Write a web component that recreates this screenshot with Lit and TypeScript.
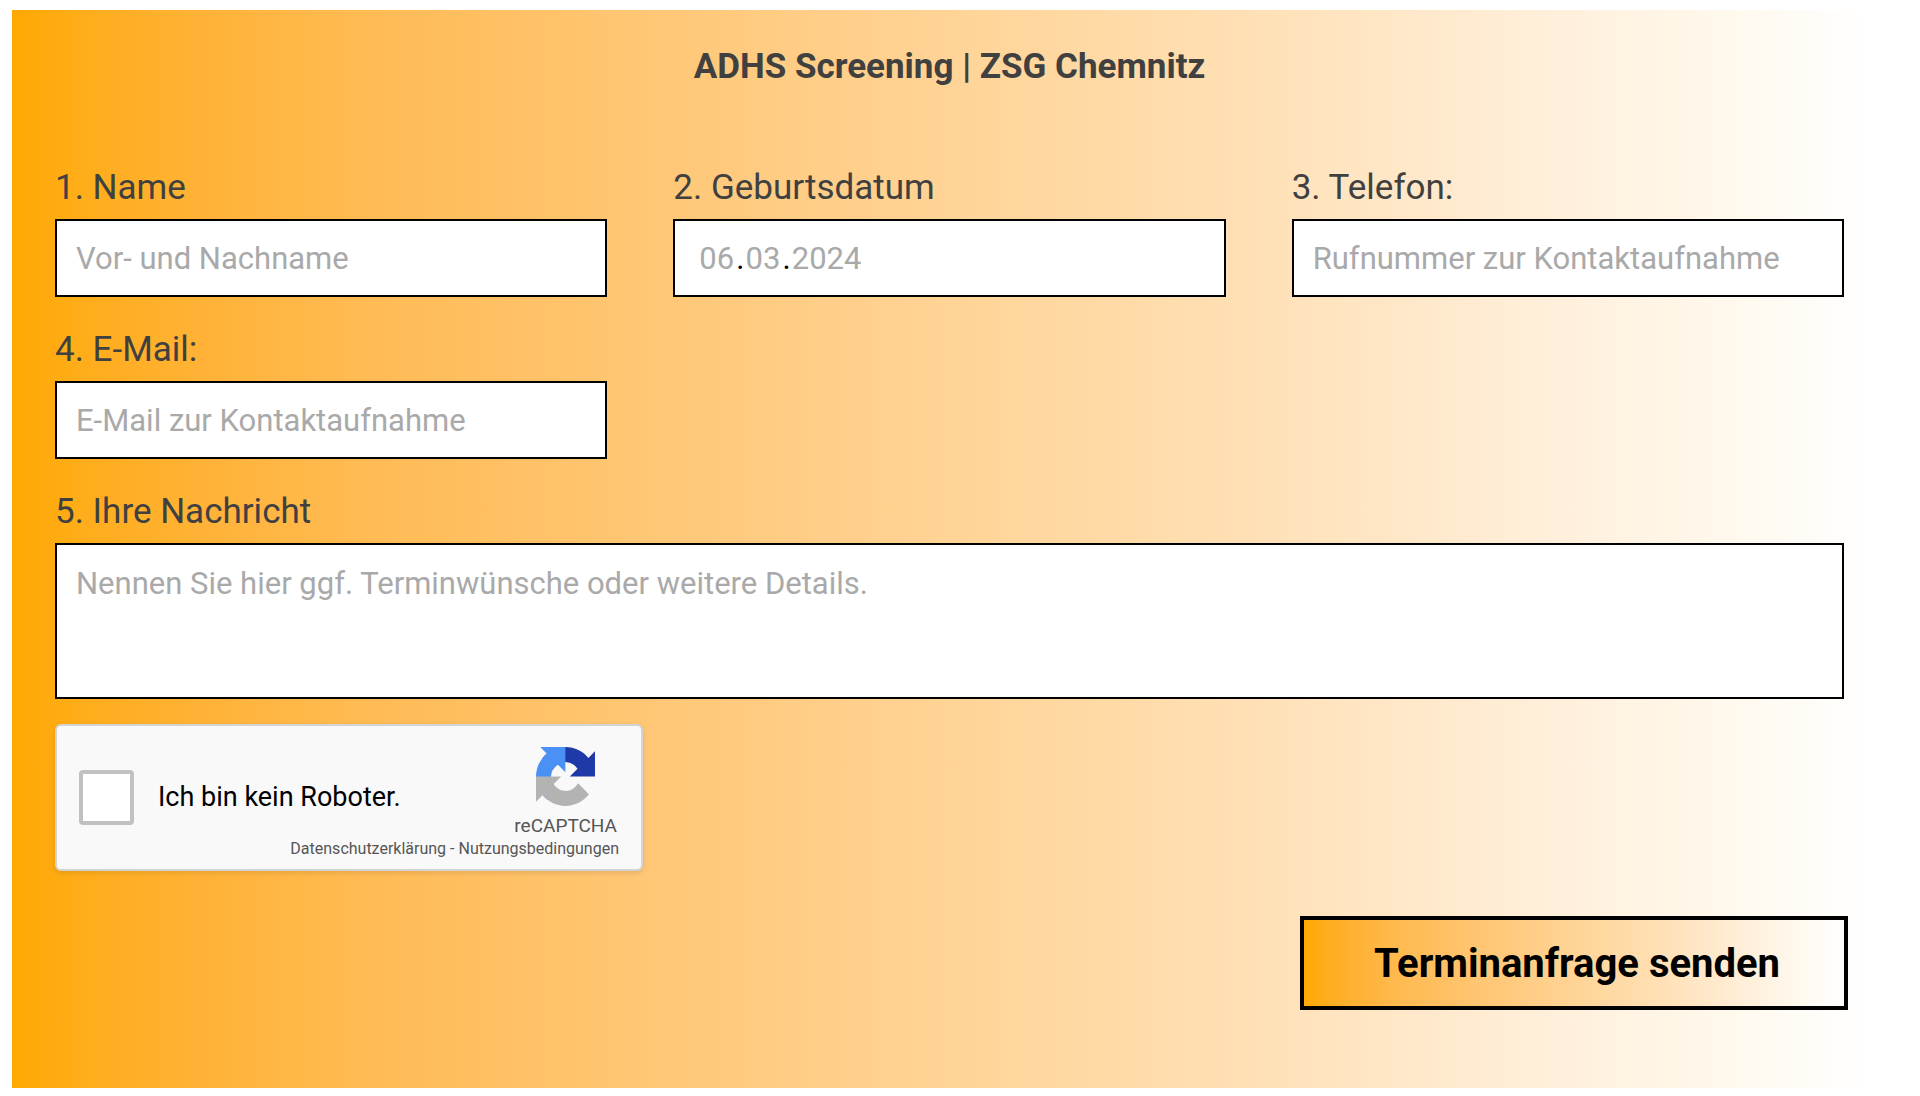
import { LitElement, html, css } from "lit";
import { customElement } from "lit/decorators.js";

@customElement("recaptcha-box")
class RecaptchaBox extends LitElement {
  static styles = css`
    :host {
      display: block;
      font-family: Roboto, "Liberation Sans", sans-serif;
    }
    .card {
      box-sizing: border-box;
      width: 588px;
      max-width: 100%;
      display: grid;
      grid-template-columns: 1fr auto;
      padding: 9px 22px 10px;
      border: 2px solid #d3d3d3;
      border-radius: 6px;
      background: #f9f9f9;
      box-shadow: 0 2px 4px 1px rgba(0, 0, 0, 0.08);
    }
    .check {
      grid-area: 1 / 1 / 3 / 2;
      display: flex;
      align-items: center;
      gap: 24px;
      font-size: 27px;
      line-height: 32px;
      color: #000;
    }
    .tick {
      appearance: none;
      box-sizing: border-box;
      width: 55px;
      height: 55px;
      margin: 0;
      border: 4px solid #c1c1c1;
      border-radius: 4px;
      background: #fff;
    }
    .tick:checked {
      background: #4285f4;
    }
    .brand {
      grid-area: 1 / 2 / 2 / 3;
      display: flex;
      flex-direction: column;
      align-items: center;
      gap: 9px;
      padding: 12px 2px 2px 0;
      font-size: 19px;
      line-height: 22px;
      color: #555;
    }
    .logo {
      display: block;
      width: 59px;
      height: 59px;
    }
    .links {
      grid-area: 2 / 1 / 3 / 3;
      display: flex;
      justify-content: flex-end;
      gap: 4px;
      font-size: 16px;
      line-height: 20px;
      color: #555;
    }
    .link {
      color: inherit;
      text-decoration: none;
    }
  `;

  render() {
    return html`
      <div class="card">
        <label class="check">
          <input class="tick" type="checkbox" />
          <span>Ich bin kein Roboter.</span>
        </label>
        <div class="brand">
          <svg class="logo" viewBox="0 0 64 64" aria-hidden="true">
            <path fill="#2039a8" d="M64 31.955l-.033-1.37V4.687l-7.16 7.16C50.948 4.674 42.033.093 32.05.093c-10.4 0-19.622 4.96-25.458 12.64l11.736 11.86a15.55 15.55 0 0 1 4.754-5.334c2.05-1.6 4.952-2.906 8.968-2.906.485 0 .86.057 1.135.163 4.976.393 9.288 3.14 11.828 7.124l-8.307 8.307L64 31.953"/>
            <path fill="#4a90f5" d="M31.862.094l-1.37.033H4.594l7.16 7.16C4.58 13.147 0 22.06 0 32.046c0 10.4 4.96 19.622 12.64 25.458L24.5 45.768a15.55 15.55 0 0 1-5.334-4.754c-1.6-2.05-2.906-4.952-2.906-8.968 0-.485.057-.86.163-1.135.393-4.976 3.14-9.288 7.124-11.828l8.307 8.307L31.86.095"/>
            <path fill="#b3b3b3" d="M.001 32.045l.033 1.37v25.898l7.16-7.16c5.86 7.173 14.774 11.754 24.76 11.754 10.4 0 19.622-4.96 25.458-12.64l-11.736-11.86a15.55 15.55 0 0 1-4.754 5.334c-2.05 1.6-4.952 2.906-8.968 2.906-.485 0-.86-.057-1.135-.163-4.976-.393-9.288-3.14-11.828-7.124l8.307-8.307c-10.522.04-22.4.066-27.295-.005"/>
          </svg>
          <span>reCAPTCHA</span>
        </div>
        <div class="links">
          <a class="link" href="#datenschutz">Datenschutzerklärung</a>
          <span>-</span>
          <a class="link" href="#nutzung">Nutzungsbedingungen</a>
        </div>
      </div>
    `;
  }
}

@customElement("app-root")
class AppRoot extends LitElement {
  static styles = css`
    :host {
      display: block;
      padding: 10px 34px 8px 12px;
      background: #fff;
      font-family: Roboto, "Liberation Sans", sans-serif;
      color: #404040;
      --fade: #ffa902 0%, #ffad1c 4%, #ffb236 10%, #ffbb54 19%, #ffc571 32%,
        #ffd292 48%, #ffdfb3 65%, #ffeed8 81%, #fff8ec 91%, #fff 99%;
    }
    .panel {
      padding: 37px 42px 78px 43px;
      background: linear-gradient(90deg, var(--fade));
    }
    .title {
      margin: 0 0 80px;
      font-size: 35px;
      line-height: 40px;
      font-weight: 700;
      text-align: center;
    }
    .fields {
      display: grid;
      grid-template-columns: repeat(3, minmax(0, 1fr));
      gap: 32px 66px;
    }
    .field {
      display: flex;
      flex-direction: column;
      gap: 10px;
      min-width: 0;
    }
    .wide {
      grid-column: 1 / -1;
    }
    .label {
      font-size: 35px;
      line-height: 42px;
    }
    .box {
      box-sizing: border-box;
      display: block;
      width: 100%;
      height: 78px;
      margin: 0;
      padding: 0 19px;
      border: 2px solid #000;
      border-radius: 0;
      background: #fff;
      font-family: inherit;
      font-size: 31px;
      line-height: 36px;
      color: #000;
    }
    .box::placeholder,
    .part::placeholder {
      color: #a9a9a9;
      opacity: 1;
    }
    .message {
      height: 156px;
      padding: 21px 19px;
      resize: none;
    }
    .date {
      display: flex;
      align-items: center;
      gap: 1px;
      padding: 2px 24px 0;
    }
    .part {
      width: 36px;
      margin: 0;
      padding: 0;
      border: 0;
      background: none;
      font: inherit;
      color: inherit;
    }
    .year {
      width: 72px;
    }
    .captcha {
      margin-top: 25px;
    }
    .actions {
      display: flex;
      justify-content: flex-end;
      margin: 45px -4px 0 0;
    }
    .send {
      box-sizing: border-box;
      height: 94px;
      padding: 2px 64px 0 70px;
      border: 4px solid #000;
      border-radius: 0;
      background: linear-gradient(90deg, var(--fade));
      font-family: inherit;
      font-size: 40px;
      line-height: 48px;
      font-weight: 700;
      color: #000;
    }
  `;

  render() {
    return html`
      <form class="panel" @submit=${(e: Event) => e.preventDefault()}>
        <h1 class="title">ADHS Screening | ZSG Chemnitz</h1>
        <div class="fields">
          <div class="field">
            <label class="label" for="name">1. Name</label>
            <input class="box" id="name" type="text" placeholder="Vor- und Nachname" />
          </div>
          <div class="field">
            <label class="label" for="day">2. Geburtsdatum</label>
            <div class="box date">
              <input class="part" id="day" inputmode="numeric" maxlength="2" placeholder="06" />
              <span>.</span>
              <input class="part" aria-label="Monat" inputmode="numeric" maxlength="2" placeholder="03" />
              <span>.</span>
              <input class="part year" aria-label="Jahr" inputmode="numeric" maxlength="4" placeholder="2024" />
            </div>
          </div>
          <div class="field">
            <label class="label" for="phone">3. Telefon:</label>
            <input class="box" id="phone" type="tel" placeholder="Rufnummer zur Kontaktaufnahme" />
          </div>
          <div class="field">
            <label class="label" for="mail">4. E-Mail:</label>
            <input class="box" id="mail" type="email" placeholder="E-Mail zur Kontaktaufnahme" />
          </div>
          <div class="field wide">
            <label class="label" for="message">5. Ihre Nachricht</label>
            <textarea class="box message" id="message" placeholder="Nennen Sie hier ggf. Terminwünsche oder weitere Details."></textarea>
          </div>
        </div>
        <recaptcha-box class="captcha"></recaptcha-box>
        <div class="actions">
          <button class="send" type="submit">Terminanfrage senden</button>
        </div>
      </form>
    `;
  }
}
